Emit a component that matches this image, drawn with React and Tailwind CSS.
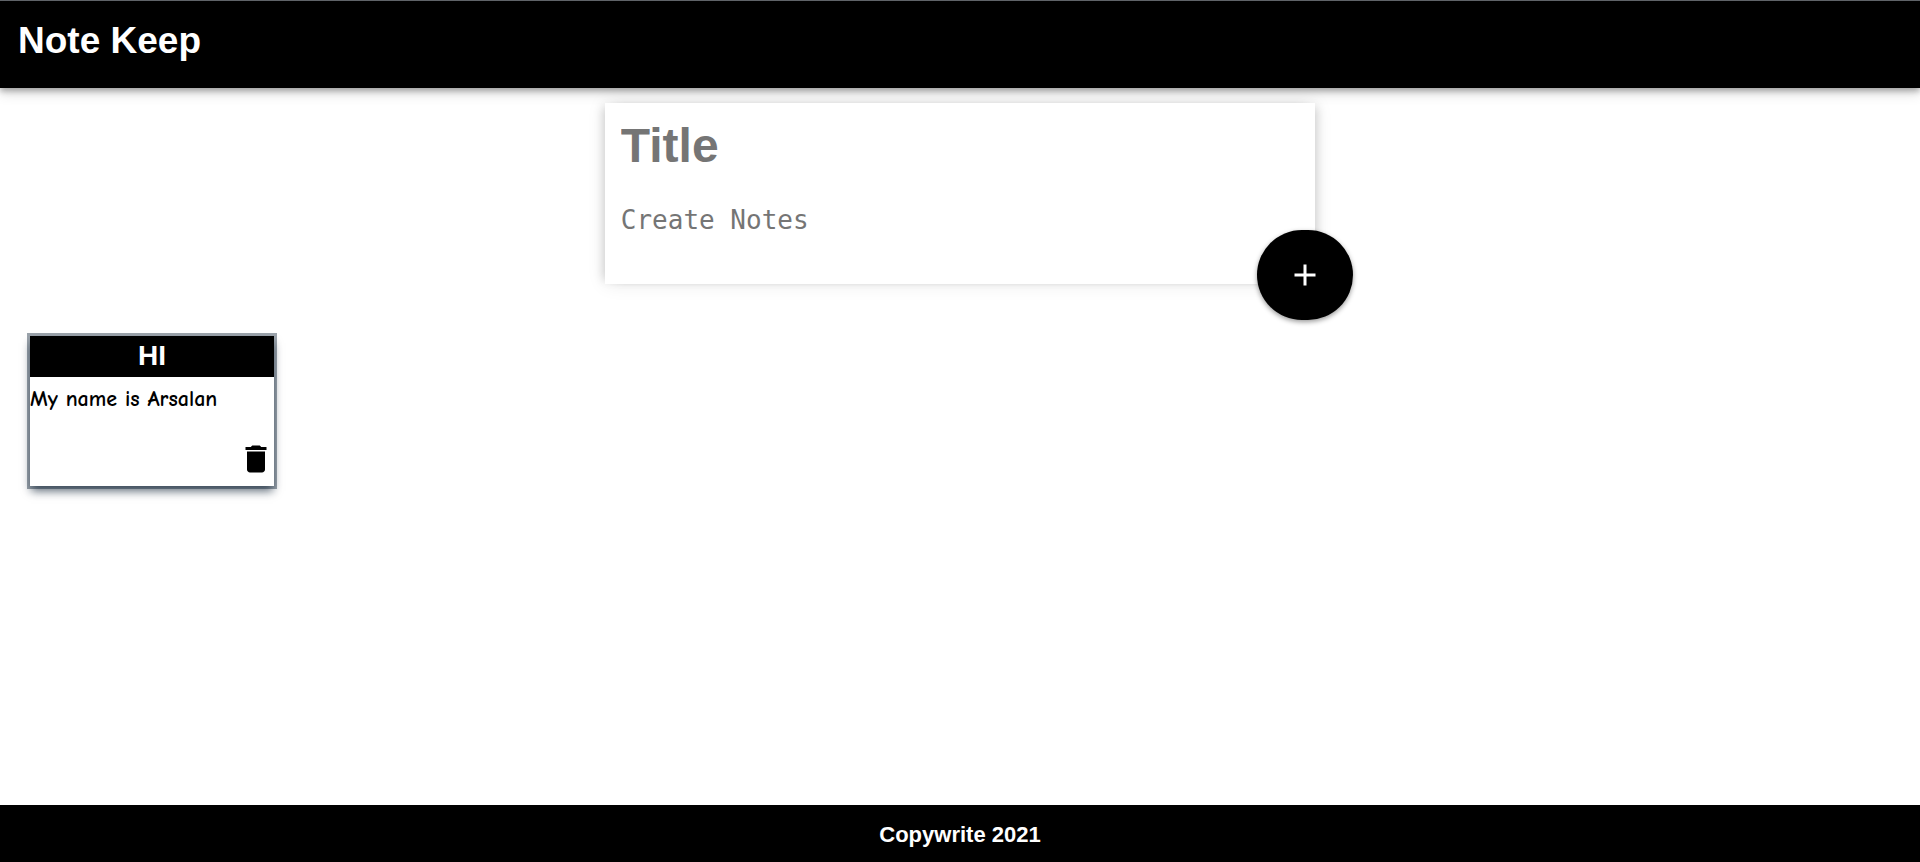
import React, { useState } from "react";

function AddIcon() {
  return (
    <svg viewBox="0 0 24 24" className="size-9 fill-current" aria-hidden="true">
      <path d="M19 13h-6v6h-2v-6H5v-2h6V5h2v6h6v2z" />
    </svg>
  );
}

function DeleteIcon() {
  return (
    <svg viewBox="0 0 24 24" className="size-9 fill-current" aria-hidden="true">
      <path d="M6 19c0 1.100.9 2 2 2h8c1.100 0 2-.9 2-2V7H6v12zM19 4h-3.500l-1-1h-5l-1 1H5v2h14V4z" />
    </svg>
  );
}

function Header() {
  return (
    <header className="border-t border-[#5f6368] bg-black px-[18px] pt-4 pb-6 shadow-[0_3px_6px_0_rgba(0,0,0,0.3),0_6px_12px_0_rgba(0,0,0,0.12)]">
      <h1 className="text-[37px] leading-[47px] font-bold text-white">Note Keep</h1>
    </header>
  );
}

function NoteForm({ onAdd }) {
  const [title, setTitle] = useState("");
  const [content, setContent] = useState("");

  function submit(event) {
    event.preventDefault();
    if (!title && !content) return;
    onAdd({ title, content });
    setTitle("");
    setContent("");
  }

  return (
    <form
      onSubmit={submit}
      className="relative mx-auto mt-[15px] flex w-[37%] flex-col bg-white px-4 pt-3 pb-5 shadow-[-6px_0_9px_-4px_rgba(0,0,0,0.14),6px_0_9px_-4px_rgba(0,0,0,0.14),0_0_18px_rgba(0,0,0,0.09)]"
    >
      <input
        type="text"
        aria-label="Title"
        placeholder="Title"
        value={title}
        onChange={(e) => setTitle(e.target.value)}
        className="h-[60px] w-full text-5xl font-bold outline-none placeholder:text-[#757575]"
      />
      <textarea
        aria-label="Create Notes"
        placeholder="Create Notes"
        rows={2}
        value={content}
        onChange={(e) => setContent(e.target.value)}
        className="mt-[29px] h-[60px] w-full resize-none font-['Consolas','DejaVu_Sans_Mono',monospace] text-[26px] leading-8 outline-none placeholder:text-[#757575]"
      />
      <button
        type="submit"
        aria-label="Add note"
        className="absolute -right-[38px] -bottom-9 flex h-[90px] w-24 items-center justify-center rounded-[45px] bg-black text-white shadow-[0_2px_5px_rgba(0,0,0,0.4)]"
      >
        <AddIcon />
      </button>
    </form>
  );
}

function Note({ title, content, onDelete }) {
  return (
    <article className="flex w-[244px] flex-col bg-white shadow-[0_0_0_3px_rgba(6,24,44,0.4),0_6px_9px_-1px_rgba(6,24,44,0.65)]">
      <h2 className="bg-black pb-0.5 text-center text-[28px] leading-[39px] font-bold text-white">{title}</h2>
      <p className="pt-2 font-['Comic_Sans_MS','Comic_Neue','Noto_Sans',sans-serif] text-[22px] leading-7 font-bold">
        {content}
      </p>
      <button type="button" aria-label="Delete note" onClick={onDelete} className="mt-7 mb-[9px] self-end">
        <DeleteIcon />
      </button>
    </article>
  );
}

export default function App() {
  const [notes, setNotes] = useState([{ id: 1, title: "HI", content: "My name is Arsalan" }]);

  return (
    <div className="flex min-h-screen flex-col bg-white font-['Liberation_Sans',Arial,sans-serif] text-black">
      <Header />
      <main className="flex-1">
        <NoteForm onAdd={(note) => setNotes([...notes, { ...note, id: Date.now() }])} />
        <section aria-label="Notes" className="mt-[52px] flex flex-wrap gap-7 px-[30px]">
          {notes.map((note) => (
            <Note
              key={note.id}
              title={note.title}
              content={note.content}
              onDelete={() => setNotes(notes.filter((n) => n.id !== note.id))}
            />
          ))}
        </section>
      </main>
      <footer className="bg-black pt-[17px] pb-[14px] text-center text-[22px] leading-[26px] font-bold text-white">
        Copywrite 2021
      </footer>
    </div>
  );
}
